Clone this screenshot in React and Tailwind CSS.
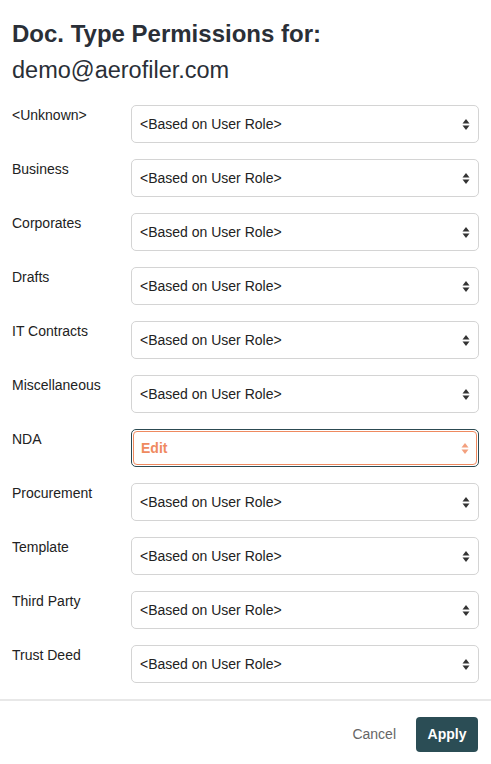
import React from "react";

const types = [
  "<Unknown>",
  "Business",
  "Corporates",
  "Drafts",
  "IT Contracts",
  "Miscellaneous",
  "NDA",
  "Procurement",
  "Template",
  "Third Party",
  "Trust Deed",
];

function Arrows({ color }) {
  return (
    <svg width="8" height="13" viewBox="0 0 8 13" className="shrink-0">
      <path d="M4 1 L7.5 5.5 L0.5 5.5 Z" fill={color} />
      <path d="M4 12 L7.5 7.5 L0.5 7.5 Z" fill={color} />
    </svg>
  );
}

function Select({ value, active }) {
  if (active) {
    return (
      <div className="flex-1 h-[38px] rounded-[5px] border border-[#2c4a52] p-px">
        <div className="h-full flex items-center justify-between rounded-[4px] border border-[#ef8a60] pl-[7px] pr-[7px] bg-white">
          <span className="text-[14px] font-bold text-[#ef8a60]">{value}</span>
          <Arrows color="#f3a07e" />
        </div>
      </div>
    );
  }
  return (
    <div className="flex-1 h-[38px] flex items-center justify-between rounded-[5px] border border-[#d4d4d4] pl-[8px] pr-[8px] bg-white">
      <span className="text-[14px] text-[#222]">{value}</span>
      <Arrows color="#333" />
    </div>
  );
}

export default function App() {
  return (
    <div className="w-[491px] h-[764px] bg-white font-['Liberation_Sans',Arial,sans-serif] text-[#2d333b] flex flex-col">
      <div className="px-[12px] pt-[20px]">
        <h1 className="text-[24px] font-bold leading-[28px] text-[#2a2f37]">
          Doc. Type Permissions for:
        </h1>
        <div className="text-[23.5px] leading-[28px] mt-[8px] text-[#2a2f37]">
          demo@aerofiler.com
        </div>
      </div>

      <div className="px-[12px] mt-[21px] flex flex-col gap-[16px]">
        {types.map((t) => (
          <div key={t} className="flex items-start">
            <div className="w-[119px] shrink-0 text-[14px] leading-[16px] pt-[2px] text-[#222]">
              {t}
            </div>
            <Select
              value={t === "NDA" ? "Edit" : "<Based on User Role>"}
              active={t === "NDA"}
            />
          </div>
        ))}
      </div>

      <div className="mt-[16px] border-t-2 border-[#e8e8e8] flex items-center justify-end gap-[20px] pt-[16px] pr-[13px]">
        <span className="text-[14px] text-[#666]">Cancel</span>
        <button className="w-[62px] h-[35px] rounded-[4px] bg-[#2b4d55] text-white text-[14px] font-bold">
          Apply
        </button>
      </div>
    </div>
  );
}
